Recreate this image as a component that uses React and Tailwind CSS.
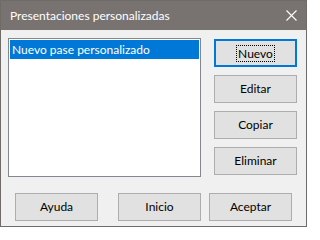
import React from "react";

function Button({ children, primary, className = "" }) {
  return (
    <button
      className={`w-[83px] h-[28px] flex items-center justify-center bg-[#e1e1e1] text-[12px] text-black ${
        primary ? "border-2 border-[#0078d7]" : "border border-[#adadad]"
      } ${className}`}
    >
      {primary ? (
        <span className="border border-dotted border-black px-[1px] leading-[15px]">{children}</span>
      ) : (
        children
      )}
    </button>
  );
}

export default function App() {
  return (
    <div className="w-[307px] h-[227px] border border-[#6f6b69] bg-[#f0f0f0] flex flex-col font-['Lato','Liberation_Sans',sans-serif]">
      {/* Title bar */}
      <div className="h-[29px] bg-[#787370] flex items-center justify-between pl-[9px] pr-[9px]">
        <span className="text-white text-[12px]">Presentaciones personalizadas</span>
        <svg width="11" height="11" viewBox="0 0 11 11">
          <path d="M0.5 0.5 L10.5 10.5 M10.5 0.5 L0.5 10.5" stroke="white" strokeWidth="1.1" />
        </svg>
      </div>

      {/* Body */}
      <div className="flex pl-[7px] pt-[8px]">
        <div className="w-[193px] h-[139px] border border-[#828790] bg-white p-[1px]">
          <div className="h-[19px] bg-[#0078d7] text-white text-[12px] flex items-center pl-[2px]">
            Nuevo pase personalizado
          </div>
        </div>
        <div className="ml-[13px] pt-[1px] flex flex-col gap-[8px]">
          <Button primary>Nuevo</Button>
          <Button>Editar</Button>
          <Button>Copiar</Button>
          <Button>Eliminar</Button>
        </div>
      </div>

      <div className="flex mt-[16px] pl-[14px]">
        <Button>Ayuda</Button>
        <Button className="ml-[20px]">Inicio</Button>
        <Button className="ml-[8px]">Aceptar</Button>
      </div>
    </div>
  );
}
